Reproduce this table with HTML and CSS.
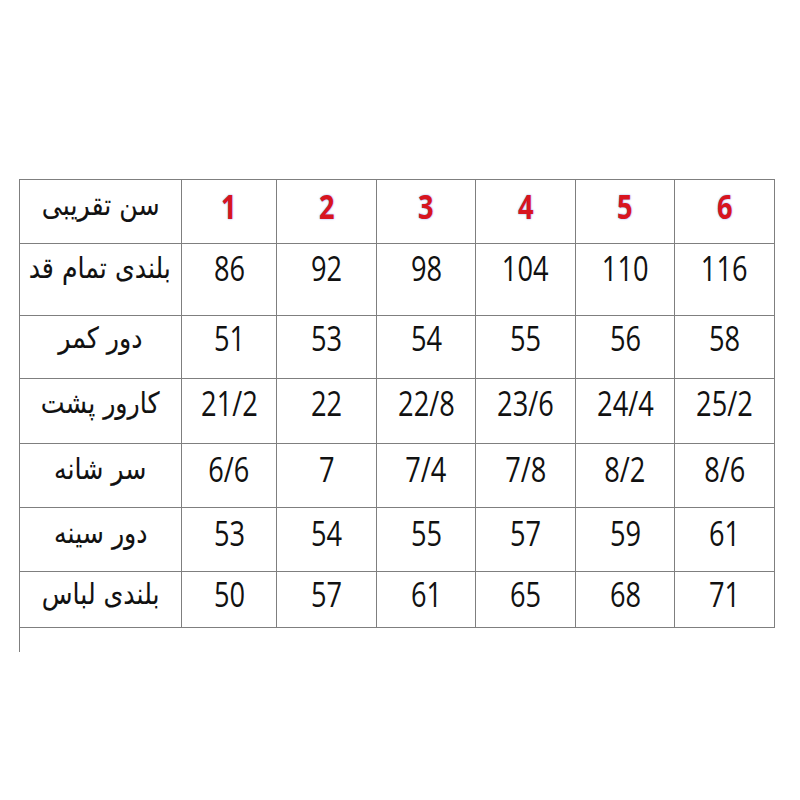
FILE: index.html
```html
<!DOCTYPE html>
<html lang="fa">
<head>
<meta charset="utf-8">
<title>جدول سایز</title>
<link rel="stylesheet" href="styles.css">
</head>
<body>
<div class="page">
  <div class="sizes">
    <div class="row r-head">
      <div class="cell label"><span class="label-text">سن تقریبی</span></div>
      <div class="cell"><span class="num head">1</span></div>
      <div class="cell"><span class="num head">2</span></div>
      <div class="cell"><span class="num head">3</span></div>
      <div class="cell"><span class="num head">4</span></div>
      <div class="cell"><span class="num head">5</span></div>
      <div class="cell"><span class="num head">6</span></div>
    </div>
    <div class="row r-2">
      <div class="cell label"><span class="label-text">بلندی تمام قد</span></div>
      <div class="cell"><span class="num">86</span></div>
      <div class="cell"><span class="num">92</span></div>
      <div class="cell"><span class="num">98</span></div>
      <div class="cell"><span class="num">104</span></div>
      <div class="cell"><span class="num">110</span></div>
      <div class="cell"><span class="num">116</span></div>
    </div>
    <div class="row r-3">
      <div class="cell label"><span class="label-text">دور کمر</span></div>
      <div class="cell"><span class="num">51</span></div>
      <div class="cell"><span class="num">53</span></div>
      <div class="cell"><span class="num">54</span></div>
      <div class="cell"><span class="num">55</span></div>
      <div class="cell"><span class="num">56</span></div>
      <div class="cell"><span class="num">58</span></div>
    </div>
    <div class="row r-4">
      <div class="cell label"><span class="label-text">کارور پشت</span></div>
      <div class="cell"><span class="num">21/2</span></div>
      <div class="cell"><span class="num">22</span></div>
      <div class="cell"><span class="num">22/8</span></div>
      <div class="cell"><span class="num">23/6</span></div>
      <div class="cell"><span class="num">24/4</span></div>
      <div class="cell"><span class="num">25/2</span></div>
    </div>
    <div class="row r-5">
      <div class="cell label"><span class="label-text">سر شانه</span></div>
      <div class="cell"><span class="num">6/6</span></div>
      <div class="cell"><span class="num">7</span></div>
      <div class="cell"><span class="num">7/4</span></div>
      <div class="cell"><span class="num">7/8</span></div>
      <div class="cell"><span class="num">8/2</span></div>
      <div class="cell"><span class="num">8/6</span></div>
    </div>
    <div class="row r-6">
      <div class="cell label"><span class="label-text">دور سینه</span></div>
      <div class="cell"><span class="num">53</span></div>
      <div class="cell"><span class="num">54</span></div>
      <div class="cell"><span class="num">55</span></div>
      <div class="cell"><span class="num">57</span></div>
      <div class="cell"><span class="num">59</span></div>
      <div class="cell"><span class="num">61</span></div>
    </div>
    <div class="row r-7">
      <div class="cell label"><span class="label-text">بلندی لباس</span></div>
      <div class="cell"><span class="num">50</span></div>
      <div class="cell"><span class="num">57</span></div>
      <div class="cell"><span class="num">61</span></div>
      <div class="cell"><span class="num">65</span></div>
      <div class="cell"><span class="num">68</span></div>
      <div class="cell"><span class="num">71</span></div>
    </div>
  </div>
  <div class="tail"></div>
</div>
</body>
</html>
```

FILE: styles.css
```css
html, body {
  margin: 0;
  padding: 0;
  background: #ffffff;
}

.page {
  padding: 179px 0 0 19px;
}

.sizes {
  display: grid;
  grid-template-columns: 162px 95px 100px 99px 100px 99px 100px;
  grid-template-rows: 64px 72px 63px 65px 64px 64px 56px;
  width: max-content;
  border-top: 1px solid #7f7f7f;
  border-left: 1px solid #7f7f7f;
}

.row {
  display: contents;
}

.cell {
  box-sizing: border-box;
  border-right: 1px solid #7f7f7f;
  border-bottom: 1px solid #7f7f7f;
  text-align: center;
  color: #111111;
  font-family: "Open Sans", "DejaVu Sans", sans-serif;
  font-size: 34px;
  line-height: 40px;
  overflow: hidden;
  white-space: nowrap;
}

.cell.label {
  font-family: "DejaVu Sans", sans-serif;
  font-size: 29px;
  direction: rtl;
}

.label-text {
  display: inline-block;
  transform: scaleX(0.87);
  -webkit-text-stroke: 0.1px #111111;
}

.num {
  display: inline-block;
  transform: scaleX(0.8);
}

.num.head {
  color: #d8141f;
  font-weight: 700;
  text-shadow: 0 0 2px rgba(70, 110, 230, 0.75);
}

.r-head .cell { padding-top: 6px; }
.r-2 .cell { padding-top: 4px; }
.r-3 .cell { padding-top: 2px; }
.r-4 .cell { padding-top: 4px; }
.r-5 .cell { padding-top: 5px; }
.r-6 .cell { padding-top: 5px; }
.r-7 .cell { padding-top: 2px; }

.r-head .cell.label { padding-top: 5px; }
.r-2 .cell.label { padding-top: 4px; }
.r-3 .cell.label { padding-top: 2px; }
.r-4 .cell.label { padding-top: 4px; }
.r-5 .cell.label { padding-top: 5px; }
.r-6 .cell.label { padding-top: 5px; }
.r-7 .cell.label { padding-top: 2px; }

.tail {
  width: 0;
  height: 24px;
  border-left: 1px solid #7f7f7f;
}
```
